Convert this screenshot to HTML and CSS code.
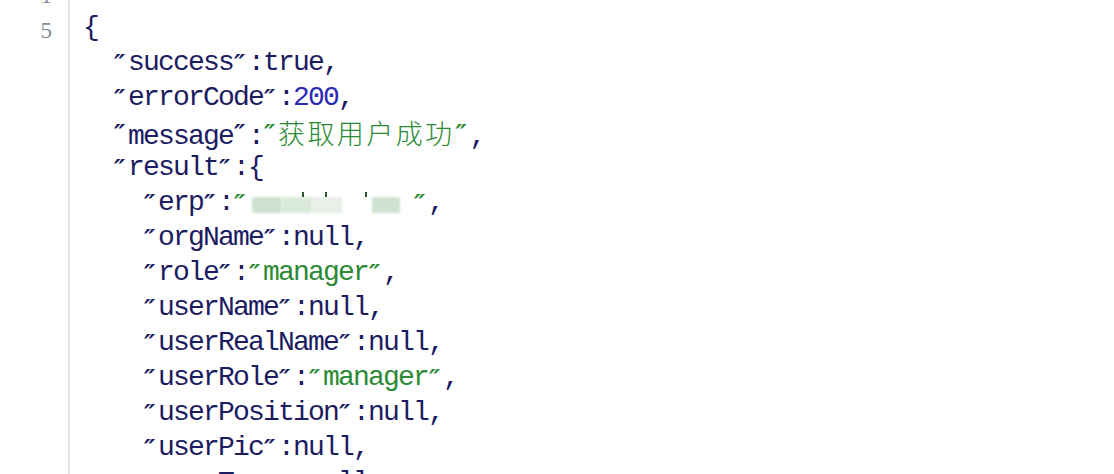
FILE: index.html
```html
<!DOCTYPE html>
<html>
<head>
<meta charset="utf-8">
<link rel="stylesheet" href="styles.css">
</head>
<body>
<div class="editor">
  <div class="gutter">
    <div class="ln">1</div>
    <div class="ln">5</div>
  </div>
  <div class="code">
    <div class="line"></div>
    <div class="line">{</div>
    <div class="line i1"><span class="q">″</span>success<span class="q">″</span>:true,</div>
    <div class="line i1"><span class="q">″</span>errorCode<span class="q">″</span>:<span class="num">200</span>,</div>
    <div class="line i1"><span class="q">″</span>message<span class="q">″</span>:<span class="str"><span class="q">″</span><span class="cjk">获取用户成功</span><span class="q">″</span></span>,</div>
    <div class="line i1"><span class="q">″</span>result<span class="q">″</span>:{</div>
    <div class="line i2"><span class="q">″</span>erp<span class="q">″</span>:<span class="str"><span class="q">″</span><span class="blur"><span class="b1"></span><span class="b2"></span><span class="b3"></span><span class="tk t1"></span><span class="tk t2"></span><span class="tk t3"></span><span class="b4"></span></span><span class="q">″</span></span>,</div>
    <div class="line i2"><span class="q">″</span>orgName<span class="q">″</span>:null,</div>
    <div class="line i2"><span class="q">″</span>role<span class="q">″</span>:<span class="str"><span class="q">″</span>manager<span class="q">″</span></span>,</div>
    <div class="line i2"><span class="q">″</span>userName<span class="q">″</span>:null,</div>
    <div class="line i2"><span class="q">″</span>userRealName<span class="q">″</span>:null,</div>
    <div class="line i2"><span class="q">″</span>userRole<span class="q">″</span>:<span class="str"><span class="q">″</span>manager<span class="q">″</span></span>,</div>
    <div class="line i2"><span class="q">″</span>userPosition<span class="q">″</span>:null,</div>
    <div class="line i2"><span class="q">″</span>userPic<span class="q">″</span>:null,</div>
    <div class="line i2"><span class="q">″</span>userType<span class="q">″</span>:null,</div>
  </div>
</div>
</body>
</html>
```
FILE: styles.css
```css
html, body {
  margin: 0;
  padding: 0;
  background: #ffffff;
  overflow: hidden;
}
.editor {
  display: flex;
  margin-top: -25px;
  font-family: "Liberation Mono", "Courier New", monospace;
  font-size: 28px;
  letter-spacing: -1.8px;
  line-height: 35px;
  color: #1c1c62;
}
.gutter {
  width: 68px;
  border-right: 2px solid #e2e2e2;
  min-height: 600px;
  flex: none;
}
.ln {
  height: 35px;
  line-height: 35px;
  text-align: right;
  padding-right: 16px;
  padding-top: 3px;
  margin-bottom: -3px;
  font-family: "Liberation Serif", serif;
  font-size: 23px;
  letter-spacing: 0;
  color: #7f8c99;
}
.code {
  padding-left: 13px;
}
.line {
  height: 35px;
  white-space: pre;
}
.i1 { padding-left: 30px; }
.i2 { padding-left: 60px; }
.q {
  display: inline-block;
  width: 15px;
  font-family: "DejaVu Sans", sans-serif;
  font-size: 25px;
  font-style: italic;
  font-weight: bold;
  letter-spacing: 0;
  vertical-align: top;
  line-height: 37px;
  text-indent: 1px;
}
.num { color: #2a2ab4; }
.str { color: #2b8a35; }
.cjk {
  font-family: "Noto Sans CJK SC", sans-serif;
  font-size: 27px;
  font-weight: 300;
  letter-spacing: 2.4px;
}
.blur {
  display: inline-block;
  position: relative;
  width: 165px;
  height: 35px;
  vertical-align: top;
}
.blur span { position: absolute; }
.b1 { left: 4px; top: 12px; width: 30px; height: 16px; background: #cce2cf; border-radius: 3px; filter: blur(1px); }
.b2 { left: 34px; top: 12px; width: 30px; height: 16px; background: #d9eada; filter: blur(1px); }
.b3 { left: 64px; top: 12px; width: 30px; height: 16px; background: #e8f0e8; filter: blur(1px); }
.b4 { left: 124px; top: 12px; width: 28px; height: 16px; background: #cfe3d1; filter: blur(1px); }
.tk { width: 2px; height: 5px; background: #2c5a30; top: 7px; }
.t1 { left: 54px; }
.t2 { left: 77px; }
.t3 { left: 117px; }
```
